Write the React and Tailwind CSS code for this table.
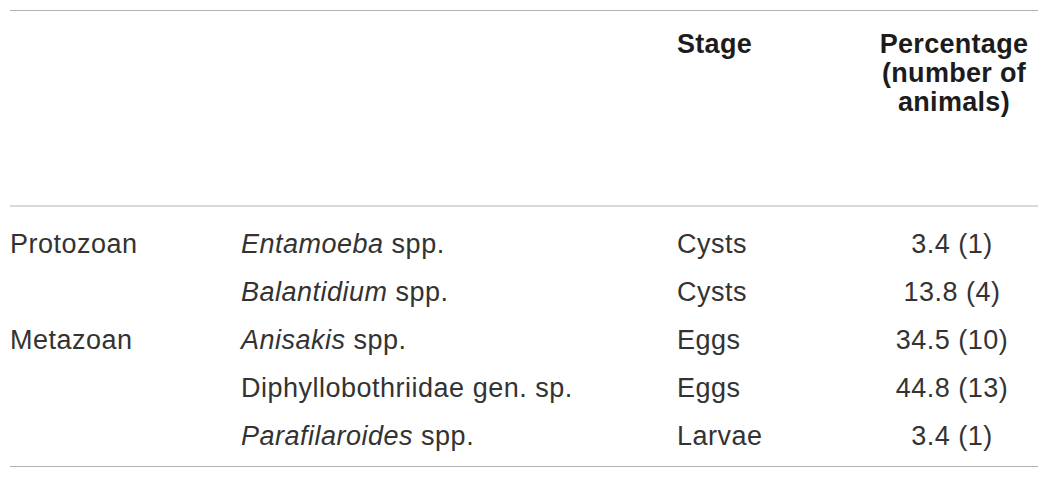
import React from "react";

const rows = [
  { group: "Protozoan", genus: "Entamoeba", rest: " spp.", stage: "Cysts", pct: "3.4 (1)" },
  { group: "", genus: "Balantidium", rest: " spp.", stage: "Cysts", pct: "13.8 (4)" },
  { group: "Metazoan", genus: "Anisakis", rest: " spp.", stage: "Eggs", pct: "34.5 (10)" },
  { group: "", genus: "", rest: "Diphyllobothriidae gen. sp.", stage: "Eggs", pct: "44.8 (13)" },
  { group: "", genus: "Parafilaroides", rest: " spp.", stage: "Larvae", pct: "3.4 (1)" },
];

export default function App() {
  return (
    <div
      className="w-[1050px] h-[480px] bg-white pt-[10px] pl-[10px]"
      style={{ fontFamily: '"Liberation Sans", Arial, sans-serif' }}
    >
      <div className="w-[1028px] border-t border-[#b3b3b3] border-b">
        <div className="grid grid-cols-[231px_436px_189px_172px] h-[196px] border-b-2 border-[#d9d9d9] pt-[19px] text-[27px] leading-[29px] font-bold tracking-[0.3px] text-[#1c1c1c]">
          <div></div>
          <div></div>
          <div>Stage</div>
          <div className="text-center pl-[4px]">
            Percentage
            <br />
            (number of
            <br />
            animals)
          </div>
        </div>
        <div className="pt-[13px] pb-[6px] text-[27px] leading-[48px] tracking-[0.5px] text-[#333333]">
          {rows.map((r, i) => (
            <div key={i} className="grid grid-cols-[231px_436px_189px_172px]">
              <div>{r.group}</div>
              <div>
                {r.genus && <span className="italic">{r.genus}</span>}
                {r.rest}
              </div>
              <div>{r.stage}</div>
              <div className="text-center">{r.pct}</div>
            </div>
          ))}
        </div>
      </div>
    </div>
  );
}
